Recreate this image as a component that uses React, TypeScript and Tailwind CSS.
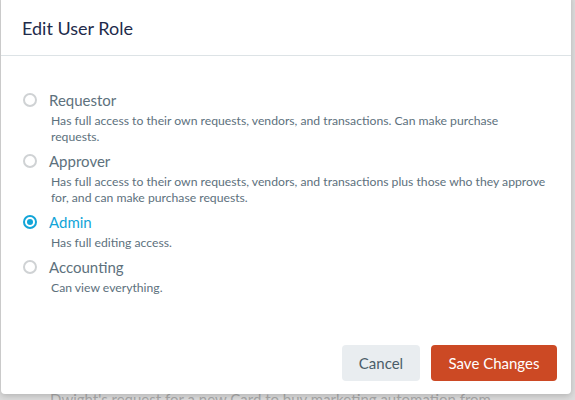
import React, { useState } from 'react';

type Role = {
  id: string;
  name: string;
  description: string;
};

const roles: Role[] = [
  {
    id: 'requestor',
    name: 'Requestor',
    description:
      'Has full access to their own requests, vendors, and transactions. Can make purchase requests.',
  },
  {
    id: 'approver',
    name: 'Approver',
    description:
      'Has full access to their own requests, vendors, and transactions plus those who they approve for, and can make purchase requests.',
  },
  { id: 'admin', name: 'Admin', description: 'Has full editing access.' },
  { id: 'accounting', name: 'Accounting', description: 'Can view everything.' },
];

function RadioDot({ checked }: { checked: boolean }) {
  return checked ? (
    <span className="flex h-[14px] w-[14px] items-center justify-center rounded-full border-2 border-[#12a5d8]">
      <span className="h-[6px] w-[6px] rounded-full bg-[#12a5d8]" />
    </span>
  ) : (
    <span className="h-[14px] w-[14px] rounded-full border-2 border-[#cfd2d4]" />
  );
}

export default function App() {
  const [selected, setSelected] = useState('admin');

  return (
    <div className="relative h-[400px] w-[575px] overflow-hidden bg-[#dcdcdc] font-['Lato',sans-serif]">
      {/* page content behind the dialog */}
      <p className="absolute left-[50px] top-[388px] text-[15px] text-[#a9a9a9]">
        Dwight's request for a new Card to buy marketing automation from
      </p>

      {/* Dialog */}
      <div className="absolute left-[1px] top-[-6px] flex h-[400px] w-[570px] flex-col rounded-[4px] bg-white shadow-[0_2px_6px_rgba(0,0,0,0.18)]">
        <div className="flex h-[62px] items-end border-b border-[#dde3e6] px-[21px] pb-[16px]">
          <h2 className="text-[18px] leading-[22px] text-[#1e2b4b]">Edit User Role</h2>
        </div>

        <div className="flex flex-col gap-[6px] px-[22px] pt-[34px]">
          {roles.map(role => {
            const checked = selected === role.id;
            return (
              <label key={role.id} className="flex cursor-pointer flex-col" onClick={() => setSelected(role.id)}>
                <div className="flex items-center gap-[12px]">
                  <RadioDot checked={checked} />
                  <span className={`text-[15px] leading-[20px] ${checked ? 'text-[#12a5d8]' : 'text-[#5d717d]'}`}>
                    {role.name}
                  </span>
                </div>
                <p className="ml-[28px] mt-[3px] max-w-[496px] text-[12.2px] leading-[16px] text-[#5d717d]">
                  {role.description}
                </p>
              </label>
            );
          })}
        </div>

        <div className="mt-auto flex justify-end gap-[11px] px-[14px] pb-[13px]">
          <button className="h-[36px] w-[78px] rounded-[4px] bg-[#e9edf0] text-[15px] text-[#4b5d68]">Cancel</button>
          <button className="h-[36px] w-[126px] rounded-[4px] bg-[#cc4924] text-[15px] text-white">Save Changes</button>
        </div>
      </div>
    </div>
  );
}
